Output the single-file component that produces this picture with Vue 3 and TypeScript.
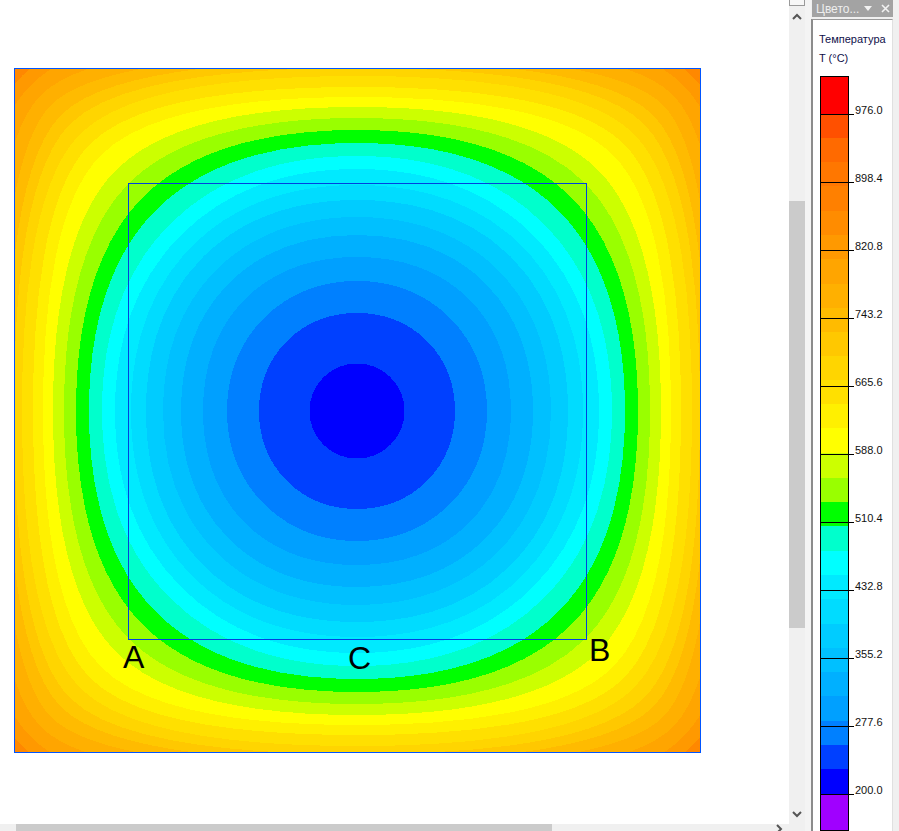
<script setup lang="ts">
interface Level { color: string; a: number; d: number }

const CX = 357
const CY = 411

// Contours from the outermost band to the innermost: a = radius on the axes, d = offset on the diagonal.
const levels: Level[] = [
  { color: '#ff9900', a: 420, d: 335 },
  { color: '#ffa500', a: 395, d: 326 },
  { color: '#ffb000', a: 370, d: 316 },
  { color: '#ffbb00', a: 357, d: 306 },
  { color: '#ffc800', a: 350, d: 296 },
  { color: '#ffd500', a: 343, d: 287 },
  { color: '#ffe000', a: 335, d: 277 },
  { color: '#fff000', a: 324, d: 267 },
  { color: '#ffff00', a: 314, d: 256 },
  { color: '#ccff00', a: 304, d: 241 },
  { color: '#99ff00', a: 293, d: 228 },
  { color: '#00ff00', a: 281, d: 214 },
  { color: '#00ffcc', a: 268, d: 201 },
  { color: '#00ffff', a: 255, d: 187 },
  { color: '#00eaff', a: 242, d: 176 },
  { color: '#00dcff', a: 226, d: 165 },
  { color: '#00ccff', a: 211, d: 154 },
  { color: '#00c0ff', a: 194, d: 141 },
  { color: '#00b0ff', a: 176, d: 128 },
  { color: '#00a0ff', a: 154, d: 112 },
  { color: '#0080ff', a: 130, d: 93 },
  { color: '#0040ff', a: 98, d: 70 },
  { color: '#0000ff', a: 47.5, d: 33.6 },
]

// Eight mirrored cubic arcs: flat on the axes, perpendicular to the diagonal at the corners.
function contour({ a, d }: Level): string {
  const k1 = a < 200 ? 0.62 : 0.45
  const k2 = a < 200 ? 0.7 : 0.85
  const p = k1 * (2 * d - a)
  const u = d - k2 * (a - d)
  const v = d + k2 * (a - d)
  const pt = (x: number, y: number) => `${(CX + x).toFixed(1)} ${(CY + y).toFixed(1)}`
  const arc = (...c: number[]) =>
    `C${pt(c[0], c[1])} ${pt(c[2], c[3])} ${pt(c[4], c[5])}`
  return [
    `M${pt(0, -a)}`,
    arc(p, -a, u, -v, d, -d),
    arc(v, -u, a, -p, a, 0),
    arc(a, p, v, u, d, d),
    arc(u, v, p, a, 0, a),
    arc(-p, a, -u, v, -d, d),
    arc(-v, u, -a, p, -a, 0),
    arc(-a, -p, -v, -u, -d, -d),
    arc(-u, -v, -p, -a, 0, -a),
    'Z',
  ].join('')
}

const bands = levels.map((l) => ({ color: l.color, path: contour(l) }))

const barTop = 77
const segments: [number, string][] = [
  [114, '#ff0000'], [138, '#ff5000'], [162, '#ff6a00'], [186, '#ff7700'], [211, '#ff8000'],
  [235, '#ff8c00'], [259, '#ff9900'], [284, '#ffa500'], [308, '#ffb000'], [332, '#ffbb00'],
  [356, '#ffc800'], [380, '#ffd500'], [404, '#ffe000'], [428, '#fff000'], [453, '#ffff00'],
  [478, '#ccff00'], [502, '#99ff00'], [526, '#00ff00'], [551, '#00ffcc'], [575, '#00ffff'],
  [599, '#00eaff'], [624, '#00dcff'], [648, '#00ccff'], [672, '#00c0ff'], [696, '#00b0ff'],
  [721, '#00a0ff'], [745, '#0080ff'], [769, '#0040ff'], [794, '#0000ff'], [830, '#a000ff'],
]
const barSegments = segments.map(([end, color], i) => ({
  color,
  height: end - (i === 0 ? barTop : segments[i - 1][0]),
}))

const ticks = ['976.0', '898.4', '820.8', '743.2', '665.6', '588.0', '510.4', '432.8', '355.2', '277.6', '200.0']
  .map((label, i) => ({ label, top: 114 + i * 68 - (barTop - 1) }))
</script>

<template>
  <div class="app">
    <div class="left">
      <div class="view">
        <svg class="plot" width="783" height="824" viewBox="0 0 783 824">
          <defs>
            <clipPath id="plot-clip"><rect x="15" y="69" width="685" height="683" /></clipPath>
          </defs>
          <g clip-path="url(#plot-clip)" shape-rendering="crispEdges">
            <rect x="15" y="69" width="685" height="683" fill="#ff8800" />
            <path v-for="b in bands" :key="b.color" :d="b.path" :fill="b.color" />
          </g>
          <rect class="frame" x="14.5" y="68.5" width="686" height="684" />
          <rect class="inner" x="128.5" y="183.5" width="458" height="456" />
          <text class="mark" x="123" y="668">A</text>
          <text class="mark" x="589" y="661">B</text>
          <text class="mark" x="348" y="669">C</text>
        </svg>
        <div class="vscroll">
          <div class="cap"></div>
          <svg class="chev up" width="10" height="7" viewBox="0 0 10 7"><path d="M1 6 5 2l4 4" /></svg>
          <div class="v-track"><div class="v-thumb"></div></div>
          <svg class="chev down" width="10" height="7" viewBox="0 0 10 7"><path d="M1 1l4 4 4-4" /></svg>
        </div>
      </div>
      <div class="hscroll">
        <div class="h-thumb"></div>
        <svg class="h-arrow" width="7" height="7" viewBox="0 0 7 7"><path d="M1 1l4 4-4 4" /></svg>
      </div>
    </div>

    <div class="gutter"></div>

    <aside class="panel">
      <header class="title">
        <span class="title-text">Цвето...</span>
        <span class="tri"></span>
        <svg class="close" width="9" height="9" viewBox="0 0 9 9"><path d="M1 1l7 7M8 1 1 8" /></svg>
      </header>
      <div class="body">
        <div class="caption">Температура</div>
        <div class="caption unit">T (°C)</div>
        <div class="bar-wrap">
          <div class="bar">
            <div
              v-for="(s, i) in barSegments"
              :key="i"
              :style="{ height: s.height + 'px', background: s.color }"
            ></div>
          </div>
          <div v-for="t in ticks" :key="t.label" class="tick" :style="{ top: t.top + 'px' }">
            <span class="tick-label">{{ t.label }}</span>
          </div>
        </div>
      </div>
    </aside>
  </div>
</template>

<style scoped>
.app {
  display: flex;
  width: 899px;
  height: 831px;
  overflow: hidden;
  background: #f0f0f0;
  font-family: "Liberation Sans", Arial, sans-serif;
}
.left {
  width: 805px;
  display: flex;
  flex-direction: column;
  flex: none;
}
.view {
  display: flex;
  height: 824px;
  background: #fff;
}
.plot {
  display: block;
  flex: 1;
  width: 789px;
  overflow: visible;
}
.frame {
  fill: none;
  stroke: #0055ff;
  stroke-width: 1;
}
.inner {
  fill: none;
  stroke: #0040e0;
  stroke-width: 1;
}
.mark {
  font-family: "Liberation Sans", Arial, sans-serif;
  font-size: 32px;
  fill: #000;
}
.vscroll {
  width: 16px;
  flex: none;
  margin-left: 6px;
  background: #f0f0f0;
  display: flex;
  flex-direction: column;
  align-items: center;
}
.cap {
  width: 100%;
  height: 6px;
  background: #f7f7f7;
  border: 1px solid #9a9a9a;
  border-top: 0;
  box-sizing: border-box;
}
.chev {
  flex: none;
}
.chev path,
.h-arrow path {
  fill: none;
  stroke: #555;
  stroke-width: 2;
}
.up {
  margin-top: 7px;
}
.down {
  margin-bottom: 6px;
}
.v-track {
  flex: 1;
  width: 100%;
  padding-top: 181px;
  padding-bottom: 183px;
  box-sizing: border-box;
  display: flex;
}
.v-thumb {
  flex: 1;
  background: #cbcbcb;
}
.hscroll {
  height: 7px;
  flex: none;
  background: #f0f0f0;
  padding-left: 16px;
  display: flex;
  justify-content: space-between;
}
.h-thumb {
  width: 536px;
  background: #cbcbcb;
}
.h-arrow {
  margin-right: 22px;
}
.gutter {
  width: 6px;
  flex: none;
  background: #f4f4f4;
}
.panel {
  width: 82px;
  flex: none;
  display: flex;
  flex-direction: column;
  box-sizing: border-box;
  margin-right: 6px;
}
.title {
  height: 17px;
  flex: none;
  background: #a3a3a3;
  color: #eee;
  font-size: 12px;
  display: flex;
  align-items: center;
  padding-left: 4px;
  margin-left: 1px;
}
.title-text {
  flex: 1;
}
.tri {
  width: 0;
  height: 0;
  border-left: 4px solid transparent;
  border-right: 4px solid transparent;
  border-top: 5px solid #f2f2f2;
  margin-right: 9px;
}
.close {
  margin-right: 3px;
}
.close path {
  stroke: #f2f2f2;
  stroke-width: 1.6;
  fill: none;
}
.body {
  flex: 1;
  margin-top: 2px;
  border-left: 2px solid #8c8c8c;
  border-top: 1px solid #9a9a9a;
  border-right: 1px solid #e0e0e0;
  background: #fff;
  padding: 10px 0 0 6px;
  display: flex;
  flex-direction: column;
}
.caption {
  font-size: 11px;
  line-height: 19px;
  color: #10104a;
  white-space: nowrap;
}
.bar-wrap {
  position: relative;
  margin-top: 8px;
  margin-left: 1px;
  width: 70px;
}
.bar {
  width: 29px;
  box-sizing: border-box;
  border: 1px solid #000;
  background: #fff;
  overflow: hidden;
  height: 755px;
}
.tick {
  position: absolute;
  left: 0;
  width: 34px;
  height: 1px;
  background: #000;
}
.tick-label {
  position: absolute;
  left: 35px;
  top: -10px;
  font-size: 11px;
  line-height: 13px;
  color: #111;
}
</style>

<style>
body {
  background: #fff;
}
</style>
